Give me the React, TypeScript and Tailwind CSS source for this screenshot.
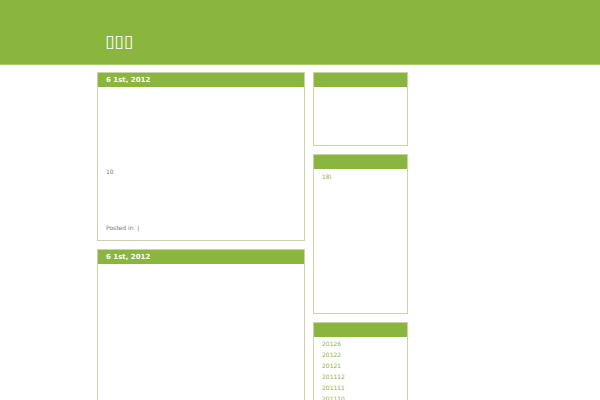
const green = 'bg-[#8ab63f]';

function Card({ date, children, bodyClass }: { date: string; children?: React.ReactNode; bodyClass: string }) {
  return (
    <div className="border border-[#cdd3a8] bg-white">
      <div className={`${green} h-[14px] pl-[8px] text-[7px] font-bold leading-[15px] text-white`}>{date}</div>
      <div className={bodyClass}>{children}</div>
    </div>
  );
}

function Widget({ children, bodyClass }: { children?: React.ReactNode; bodyClass: string }) {
  return (
    <div className="border border-[#cdd3a8] bg-white">
      <div className={`${green} h-[14px]`} />
      <div className={bodyClass}>{children}</div>
    </div>
  );
}

const archives = ['20126', '20122', '20121', '201112', '201111', '201110'];

export default function App() {
  return (
    <div className="h-[400px] overflow-hidden bg-white font-['DejaVu_Sans',sans-serif]">
      <div className={`${green} h-[65px] border-b border-[#a9cc6c]`}>
        <div className="pl-[105px] pt-[30px] text-[17px] leading-[22px] text-white">▯▯▯</div>
      </div>

      <div className="flex gap-[8px] pl-[97px] pt-[7px]">
        <div className="flex w-[208px] flex-col gap-[8px]">
          <Card date="6 1st, 2012" bodyClass="h-[153px] px-[8px] text-[6px] text-[#777]">
            <p className="pt-[81px] leading-[8px]">10</p>
            <p className="pt-[48px] leading-[8px]">Posted in &nbsp;|</p>
          </Card>
          <Card date="6 1st, 2012" bodyClass="h-[200px]" />
        </div>

        <div className="flex w-[95px] flex-col gap-[8px]">
          <Widget bodyClass="h-[58px]" />
          <Widget bodyClass="h-[144px] px-[8px] pt-[4px] text-[6px] leading-[8px] text-[#8ab63f]">
            <p>18l</p>
          </Widget>
          <Widget bodyClass="px-[8px] pt-[1px] text-[6px] text-[#8ab63f]">
            <ul className="flex flex-col">
              {archives.map((a) => (
                <li key={a} className="leading-[11px]">{a}</li>
              ))}
            </ul>
          </Widget>
        </div>
      </div>
    </div>
  );
}
